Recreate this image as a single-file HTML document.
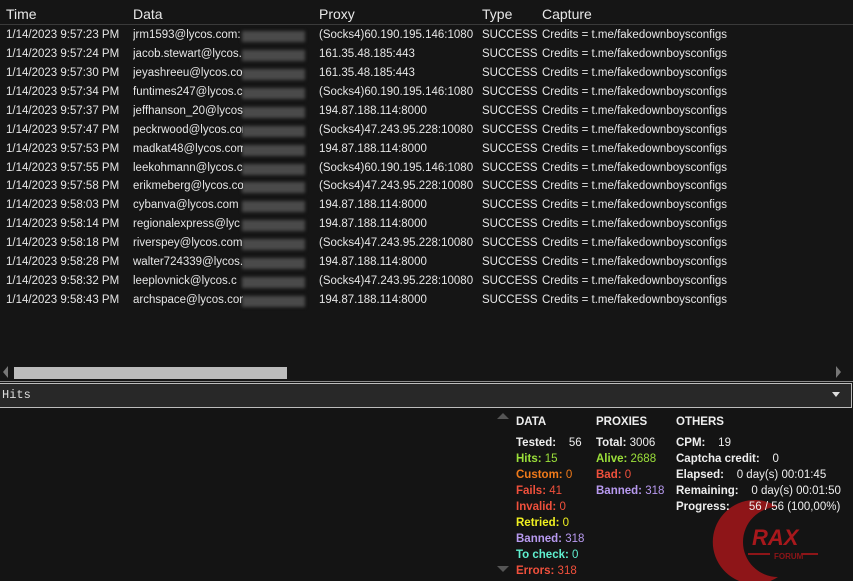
<!DOCTYPE html>
<html><head><style>
body{margin:0;width:853px;height:581px;background:#141414;font-family:"Liberation Sans",sans-serif;font-size:11.5px;color:#e6e6e6;overflow:hidden;position:relative}
.a{position:absolute;white-space:nowrap}
.hdr{font-size:14px;color:#e8e8e8}
.bl{position:absolute;background:#4a4a4a;filter:blur(1.5px)}
.s{font-weight:bold}
</style></head><body>
<div class="a" style="left:0;top:0;width:853px;height:381px;background:#151515"></div>
<div class="a hdr" style="left:6px;top:6px">Time</div>
<div class="a hdr" style="left:133px;top:6px">Data</div>
<div class="a hdr" style="left:319px;top:6px">Proxy</div>
<div class="a hdr" style="left:482px;top:6px">Type</div>
<div class="a hdr" style="left:542px;top:6px">Capture</div>
<div class="a" style="left:0;top:24px;width:853px;height:1px;background:#3a3a3a"></div>
<div id="rows"></div>
<div class="a" style="left:3px;top:366px;width:0;height:0;border-top:6px solid transparent;border-bottom:6px solid transparent;border-right:5px solid #777"></div>
<div class="a" style="left:14px;top:367px;width:273px;height:12px;background:#bcbcbc"></div>
<div class="a" style="left:836px;top:366px;width:0;height:0;border-top:6px solid transparent;border-bottom:6px solid transparent;border-left:5px solid #777"></div>
<div class="a" style="left:0;top:381px;width:853px;height:1px;background:#8a8a8a"></div>
<div class="a" style="left:0;top:383px;width:851px;height:23px;background:#282828;border:1px solid #bdbdbd;border-left:none"></div>
<div class="a" style="left:2px;top:388px;font-family:'Liberation Mono',monospace;font-size:12px;color:#ddd">Hits</div>
<div class="a" style="left:832px;top:392px;width:0;height:0;border-left:4px solid transparent;border-right:4px solid transparent;border-top:5px solid #ddd"></div>
<div class="a" style="left:497px;top:413px;width:0;height:0;border-left:6px solid transparent;border-right:6px solid transparent;border-bottom:6px solid #555"></div>
<div class="a" style="left:497px;top:566px;width:0;height:0;border-left:6px solid transparent;border-right:6px solid transparent;border-top:6px solid #555"></div>
<svg class="a" style="left:700px;top:495px" width="120" height="86"><path d="M78 12 A42 42 0 1 0 78 82 A30 30 0 1 1 78 12Z" fill="#8e1518"/><text x="52" y="50" font-family="Liberation Sans" font-weight="bold" font-style="italic" font-size="22" fill="#a8181c">RAX</text><rect x="48" y="58" width="22" height="2" fill="#8e1518"/><rect x="102" y="58" width="16" height="2" fill="#8e1518"/><text x="74" y="64" font-family="Liberation Sans" font-size="8" font-weight="bold" fill="#8e1518">FORUM</text></svg>
<div id="st"></div>
<script>
var d=[["9:57:23","jrm1593@lycos.com:","(Socks4)60.190.195.146:1080"],["9:57:24","jacob.stewart@lycos.","161.35.48.185:443"],["9:57:30","jeyashreeu@lycos.co","161.35.48.185:443"],["9:57:34","funtimes247@lycos.c","(Socks4)60.190.195.146:1080"],["9:57:37","jeffhanson_20@lycos","194.87.188.114:8000"],["9:57:47","peckrwood@lycos.com","(Socks4)47.243.95.228:10080"],["9:57:53","madkat48@lycos.com","194.87.188.114:8000"],["9:57:55","leekohmann@lycos.co","(Socks4)60.190.195.146:1080"],["9:57:58","erikmeberg@lycos.co","(Socks4)47.243.95.228:10080"],["9:58:03","cybanva@lycos.com","194.87.188.114:8000"],["9:58:14","regionalexpress@lyc","194.87.188.114:8000"],["9:58:18","riverspey@lycos.com","(Socks4)47.243.95.228:10080"],["9:58:28","walter724339@lycos.","194.87.188.114:8000"],["9:58:32","leeplovnick@lycos.c","(Socks4)47.243.95.228:10080"],["9:58:43","archspace@lycos.com","194.87.188.114:8000"]];
var h="";d.forEach(function(r,i){var y=29+i*18.93;
h+='<div class="bl" style="left:242px;top:'+(y+2)+'px;width:63px;height:11px"></div><div class="a" style="left:6px;top:'+y+'px">1/14/2023 '+r[0]+' PM</div><div class="a" style="left:133px;top:'+y+'px;width:110px;overflow:hidden">'+r[1]+'</div><div class="a" style="left:319px;top:'+y+'px">'+r[2]+'</div><div class="a" style="left:482px;top:'+y+'px">SUCCESS</div><div class="a" style="left:542px;top:'+y+'px">Credits = t.me/fakedownboysconfigs</div>';});
document.getElementById("rows").innerHTML=h;
var s=[[516,416,"DATA","#eee"],[596,416,"PROXIES","#eee"],[676,416,"OTHERS","#eee"],
[516,437,"Tested:&nbsp;&nbsp;&nbsp; <span style='font-weight:normal'>56</span>","#eee"],[516,453,"Hits: <span style='font-weight:normal'>15</span>","#9be03a"],[516,469,"Custom: <span style='font-weight:normal'>0</span>","#f07a1a"],[516,485,"Fails: <span style='font-weight:normal'>41</span>","#f0503c"],[516,501,"Invalid: <span style='font-weight:normal'>0</span>","#f0503c"],[516,517,"Retried: <span style='font-weight:normal'>0</span>","#f0f020"],[516,533,"Banned: <span style='font-weight:normal'>318</span>","#b89af0"],[516,549,"To check: <span style='font-weight:normal'>0</span>","#60f0d0"],[516,565,"Errors: <span style='font-weight:normal'>318</span>","#f0503c"],
[596,437,"Total: <span style='font-weight:normal'>3006</span>","#eee"],[596,453,"Alive: <span style='font-weight:normal'>2688</span>","#9be03a"],[596,469,"Bad: <span style='font-weight:normal'>0</span>","#f0503c"],[596,485,"Banned: <span style='font-weight:normal'>318</span>","#b89af0"],
[676,437,"CPM:&nbsp;&nbsp;&nbsp; <span style='font-weight:normal'>19</span>","#eee"],[676,453,"Captcha credit:&nbsp;&nbsp;&nbsp; <span style='font-weight:normal'>0</span>","#eee"],[676,469,"Elapsed:&nbsp;&nbsp;&nbsp; <span style='font-weight:normal'>0 day(s) 00:01:45</span>","#eee"],[676,485,"Remaining:&nbsp;&nbsp;&nbsp; <span style='font-weight:normal'>0 day(s) 00:01:50</span>","#eee"],[676,501,"Progress:&nbsp;&nbsp;&nbsp;&nbsp;&nbsp; <span style='font-weight:normal'>56 / 56 (100,00%)</span>","#eee"]];
h="";s.forEach(function(r){h+='<div class="a s" style="left:'+r[0]+'px;top:'+r[1]+'px;color:'+r[3]+'">'+r[2]+'</div>';});
document.getElementById("st").innerHTML=h;
</script>
</body></html>
